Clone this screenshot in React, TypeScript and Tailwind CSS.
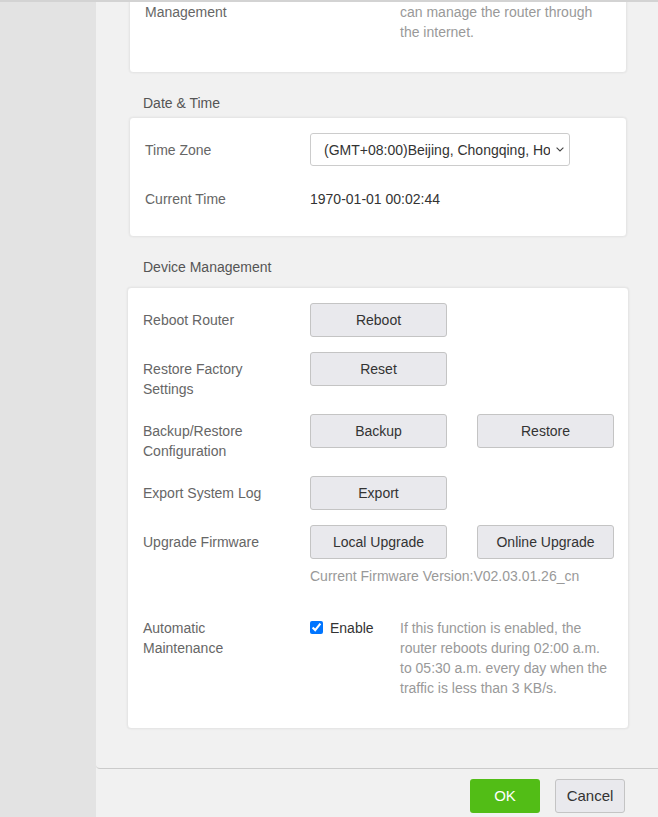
import React from "react";

const btn =
  "h-[34px] w-[137px] shrink-0 rounded-[3px] border border-[#c4c4c4] bg-[#e9e9ed] text-[14px] text-[#333]";

const Card: React.FC<{ className?: string; children: React.ReactNode }> = ({
  className = "",
  children,
}) => (
  <div
    className={
      "rounded-[4px] border border-[#e6e6e6] bg-white shadow-[0_0_2px_rgba(0,0,0,0.08)] " +
      className
    }
  >
    {children}
  </div>
);

const App: React.FC = () => {
  return (
    <div
      className="flex h-[817px] w-full overflow-hidden border-t-2 border-[#d3d3d3] bg-[#e3e3e3] text-[14px] leading-[20px] text-[#666]"
      style={{ fontFamily: '"Liberation Sans", Arial, sans-serif' }}
    >
      {/* left strip */}
      <div className="w-[96px] shrink-0 bg-[#e3e3e3]" />

      <div className="flex min-w-0 flex-1 flex-col bg-[#f1f1f1]">
        {/* scrolled content */}
        <div className="h-[767px] shrink-0 overflow-hidden rounded-bl-[4px] border-b border-[#cbcbcb] pl-[33px] pr-[31px]">
          {/* Remote management card (scrolled partly off) */}
          <Card className="-mt-[36px] pl-[15px] pr-4 pt-[15px] pb-[30px]">
            <div className="flex">
              <div className="w-[165px] shrink-0">
                Remote Web
                <br />
                Management
              </div>
              <div className="flex w-[90px] shrink-0 items-start gap-[7px] pt-[3px]">
                <input type="checkbox" className="h-[13px] w-[13px] accent-[#0075ff]" />
                <span className="-mt-[3px] text-[#333]">Enable</span>
              </div>
              <div className="w-[212px] text-[#999]">
                If this function is enabled, you can manage the router through
                the internet.
              </div>
            </div>
          </Card>

          <div className="mt-[20px] mb-[4px] pl-[14px] text-[#555]">Date &amp; Time</div>

          <Card className="pl-[15px] pr-4 pt-[15px] pb-[27px]">
            <div className="flex items-center">
              <div className="w-[165px] shrink-0">Time Zone</div>
              <div className="relative">
                <select
                  className="block h-[33px] w-[260px] appearance-none rounded-[3px] border border-[#cccccc] bg-white pl-[13px] pr-[19px] text-[14px] text-[#333] outline-none"
                  style={{ fontFamily: '"Liberation Sans", Arial, sans-serif' }}
                  defaultValue="8"
                >
                  <option value="8">(GMT+08:00)Beijing, Chongqing, Hong Kong, Urumqi</option>
                </select>
                <svg
                  className="pointer-events-none absolute right-[6px] top-[14px]"
                  width="8"
                  height="5"
                  viewBox="0 0 8 5"
                  fill="none"
                >
                  <path d="M0.6 0.6 L4 4 L7.4 0.6" stroke="#444" strokeWidth="1.1" />
                </svg>
              </div>
            </div>
            <div className="mt-[23px] flex">
              <div className="w-[165px] shrink-0">Current Time</div>
              <div className="text-[#333]">1970-01-01 00:02:44</div>
            </div>
          </Card>

          <div className="mt-[20px] mb-[10px] pl-[14px] text-[#555]">Device Management</div>

          <Card className="-mx-[2px] pl-[15px] pr-4 pt-[15px] pb-[30px]">
            <div className="flex items-center">
              <div className="w-[167px] shrink-0">Reboot Router</div>
              <button className={btn}>Reboot</button>
            </div>

            <div className="mt-[15px] flex items-start">
              <div className="w-[167px] shrink-0 pt-[7px]">
                Restore Factory
                <br />
                Settings
              </div>
              <button className={btn}>Reset</button>
            </div>

            <div className="mt-[15px] flex items-start">
              <div className="w-[167px] shrink-0 pt-[7px]">
                Backup/Restore
                <br />
                Configuration
              </div>
              <button className={btn}>Backup</button>
              <button className={btn + " ml-[30px]"}>Restore</button>
            </div>

            <div className="mt-[15px] flex items-center">
              <div className="w-[167px] shrink-0">Export System Log</div>
              <button className={btn}>Export</button>
            </div>

            <div className="mt-[15px] flex items-start">
              <div className="w-[167px] shrink-0 pt-[7px]">Upgrade Firmware</div>
              <div>
                <div className="flex">
                  <button className={btn}>Local Upgrade</button>
                  <button className={btn + " ml-[30px]"}>Online Upgrade</button>
                </div>
                <div className="mt-[7px] text-[#999]">
                  Current Firmware Version:V02.03.01.26_cn
                </div>
              </div>
            </div>

            <div className="mt-[32px] flex items-start">
              <div className="w-[167px] shrink-0">
                Automatic
                <br />
                Maintenance
              </div>
              <div className="flex w-[90px] shrink-0 items-start gap-[7px] pt-[3px]">
                <input
                  type="checkbox"
                  defaultChecked
                  className="h-[13px] w-[13px] accent-[#0075ff]"
                />
                <span className="-mt-[3px] text-[#333]">Enable</span>
              </div>
              <div className="w-[212px] text-[#999]">
                If this function is enabled, the router reboots during 02:00
                a.m. to 05:30 a.m. every day when the traffic is less than 3
                KB/s.
              </div>
            </div>
          </Card>
        </div>

        {/* footer */}
        <div className="flex flex-1 items-start justify-end gap-[15px] pt-[10px] pr-[33px]">
          <button className="h-[34px] w-[70px] rounded-[3px] bg-[#52bd16] text-[15px] text-white">
            OK
          </button>
          <button className="h-[34px] w-[70px] rounded-[3px] border border-[#c4c4c4] bg-[#e9e9ed] text-[15px] text-[#333]">
            Cancel
          </button>
        </div>
      </div>
    </div>
  );
};

export default App;
